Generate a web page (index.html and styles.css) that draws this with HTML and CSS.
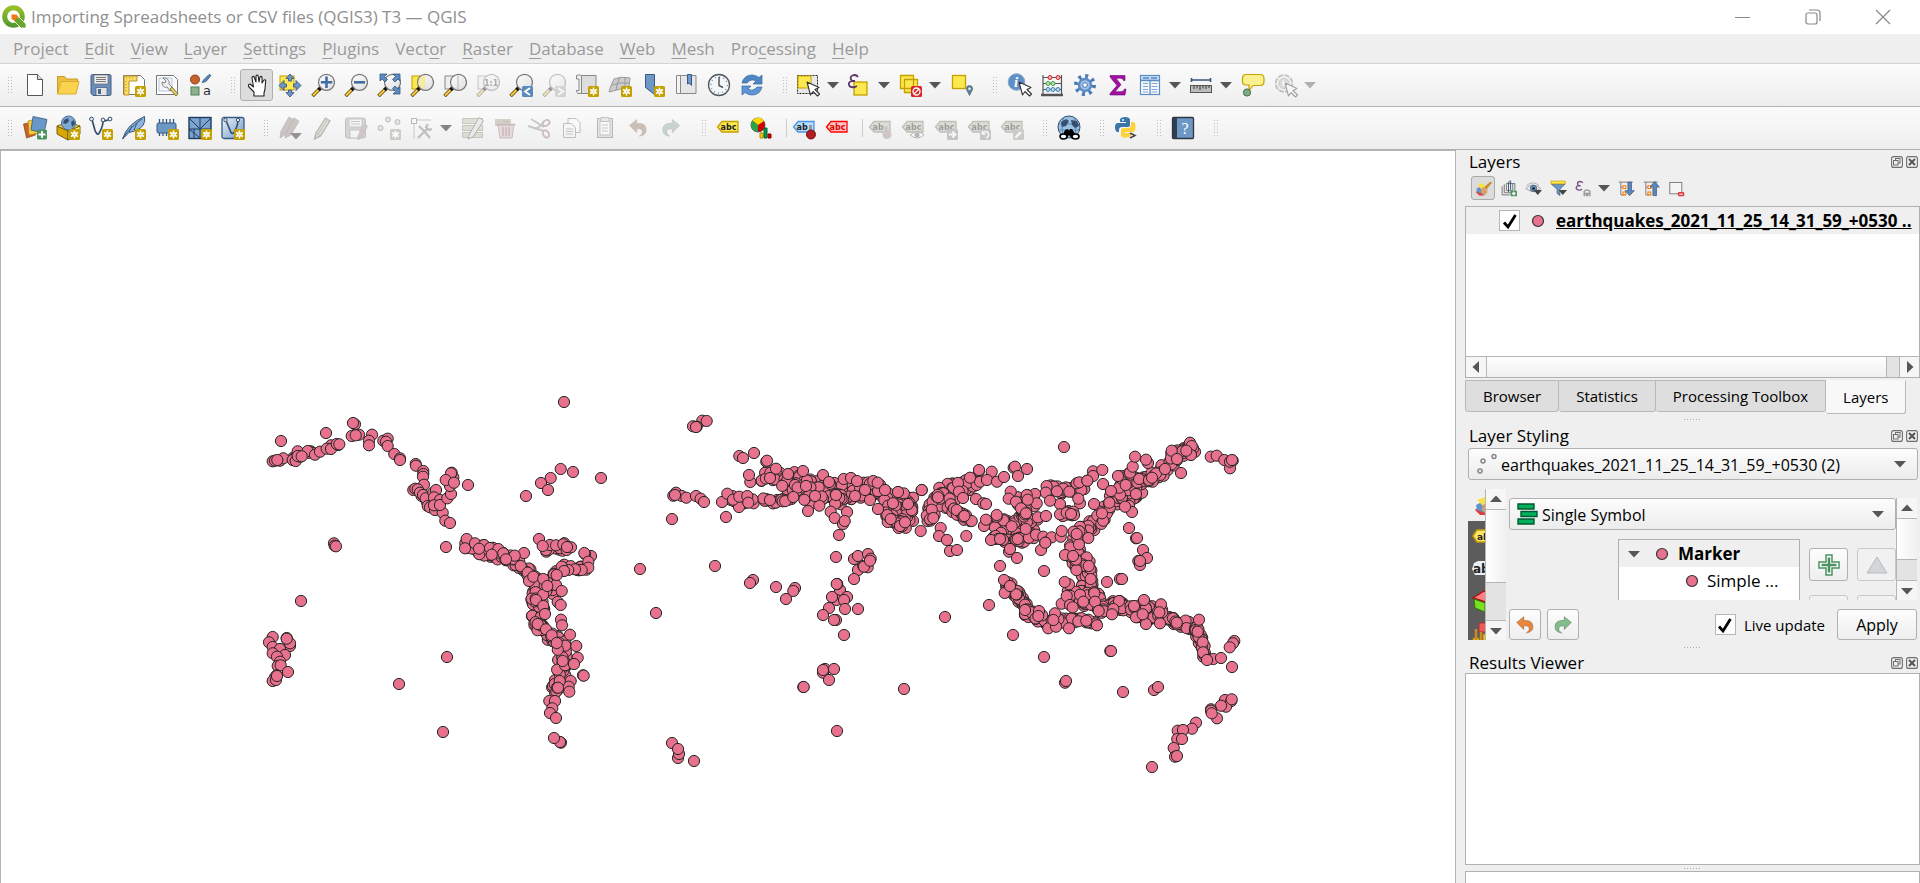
FILE: index.html
```html
<!DOCTYPE html>
<html lang="en">
<head>
<meta charset="utf-8">
<title>Importing Spreadsheets or CSV files (QGIS3) T3 — QGIS</title>
<link rel="stylesheet" href="styles.css">
</head>
<body>
<svg class="sprite" aria-hidden="true">
  <defs>
    <linearGradient id="g-lens" x1="0" y1="0" x2="1" y2="1"><stop offset="0" stop-color="#fff"/><stop offset="1" stop-color="#dcdcdc"/></linearGradient>
    <linearGradient id="g-blue" x1="0" y1="0" x2="1" y2="1"><stop offset="0" stop-color="#eef4fb"/><stop offset="1" stop-color="#6d97c4"/></linearGradient>
    <linearGradient id="g-logo" x1="0" y1="0" x2="0" y2="1"><stop offset="0" stop-color="#97bf2a"/><stop offset="1" stop-color="#579a30"/></linearGradient>
  </defs>
  <symbol id="star" viewBox="0 0 24 24"><rect x="13" y="13" width="11" height="11" rx="1.500" fill="#c4a000"/><path d="M18.500 14.500v8M15 16.500l7 4M22 16.500l-7 4" stroke="#fff" stroke-width="1.500"/><circle cx="18.500" cy="18.500" r="2.300" fill="#fff"/><circle cx="18.500" cy="18.500" r="1" fill="#e5cf6a"/></symbol>
  <symbol id="star-gray" viewBox="0 0 24 24"><rect x="13" y="13" width="11" height="11" rx="1.500" fill="#999980"/><path d="M18.500 14.500v8M15 16.500l7 4M22 16.500l-7 4" stroke="#fff" stroke-width="1.500"/><circle cx="18.500" cy="18.500" r="2.300" fill="#fff"/></symbol>
  <symbol id="lens" viewBox="0 0 24 24"><path d="M9 15.500L1.500 23" stroke="#5c4a10" stroke-width="3.600"/><path d="M8 16.500L2 22.500" stroke="#fcc93b" stroke-width="2"/><path d="M10.500 14L7.500 17" stroke="#111" stroke-width="3.600"/><circle cx="15.500" cy="9.300" r="8" fill="url(#g-lens)" fill-opacity=".9" stroke="#777" stroke-width="1.200"/></symbol>
  <symbol id="cursor" viewBox="0 0 24 24"><path d="M11 9l3.500 13 2.500-3.500 4.500 4.500 2-2-4.500-4.500 4-2z" fill="#fff" stroke="#333" stroke-width="1.100" stroke-linejoin="round"/></symbol>
  <symbol id="tag" viewBox="0 0 24 24"><path d="M1.500 11L6 5.500h16v10.500H6z" fill="var(--tag-fill)" stroke="var(--tag-line)" stroke-width="1.300"/></symbol>
  <symbol id="pencil" viewBox="0 0 24 24"><path d="M5 17L14.500 2l4.500 3L9.500 20 3.500 23z" fill="#c2c296" stroke="#555" stroke-width="1.200"/><path d="M7 18.500L16.500 3.500M5 17l4.500 3" fill="none" stroke="#777"/></symbol>
  <symbol id="undo" viewBox="0 0 24 24"><path d="M2 9l8.500-7v4.500c8 0 11 2 11 8 0 4-3 6.500-8 7 3-2 4-3.500 3.500-6-.5-2-2.500-2.500-6.500-2.500v4.500z" fill="currentColor" stroke="#8a5a2a" stroke-opacity=".55"/></symbol>
  <symbol id="redo" viewBox="0 0 24 24"><path d="M22 9l-8.500-7v4.500c-8 0-11 2-11 8 0 4 3 6.500 8 7-3-2-4-3.500-3.500-6 .5-2 2.500-2.500 6.500-2.500v4.500z" fill="currentColor" stroke="#3a6a4a" stroke-opacity=".55"/></symbol>
  <symbol id="dot" viewBox="0 0 14 14"><circle cx="7" cy="7" r="5.500" fill="#e8718d" stroke="#333" stroke-width="1.200"/></symbol>
  <symbol id="down" viewBox="0 0 12 8"><path d="M0 1h12L6 7.500z" fill="#565656"/></symbol>
  <symbol id="up" viewBox="0 0 12 8"><path d="M0 7h12L6 .5z" fill="#565656"/></symbol>
  <symbol id="check" viewBox="0 0 18 18"><path d="M3 10.500l4 4.500L14.500 3" fill="none" stroke="#000" stroke-width="2.800"/></symbol>
  <symbol id="brush" viewBox="0 0 24 24"><path d="M1 17l5-4 9 6-3 3H6z" fill="#e33b3b"/><path d="M2 12l6-3 6 8-3 3-8-3z" fill="#5e93d0"/><path d="M3 7l8-3 4 6-5 4z" fill="#f7e04a"/><path d="M9 12l3-2 6 7-5 5-5-5z" fill="#d9a064"/><path d="M13 11l1-2 8-7 2 2-7 8 1 3z" fill="#c98b28"/></symbol>
  <symbol id="float" viewBox="0 0 12 12"><rect x=".6" y=".6" width="10.800" height="10.800" rx="2" fill="none" stroke="#6e6e6e" stroke-width="1.100"/><rect x="4.500" y="2.500" width="4.500" height="4.500" fill="none" stroke="#6e6e6e"/><rect x="2.500" y="4.500" width="4.500" height="4.500" fill="#efefef" stroke="#6e6e6e"/></symbol>
  <symbol id="close" viewBox="0 0 12 12"><rect x=".6" y=".6" width="10.800" height="10.800" rx="2" fill="none" stroke="#6e6e6e" stroke-width="1.100"/><path d="M3 3l6 6M9 3L3 9" stroke="#555" stroke-width="2"/></symbol>
</svg>

<header class="titlebar">
  <svg class="logo" viewBox="0 0 24 24"><circle cx="11.500" cy="11.500" r="8.800" fill="none" stroke="url(#g-logo)" stroke-width="5"/><path d="M12 12h5l7 7v4h-5l-7-7z" fill="#6ba52e" stroke="#fff" stroke-width=".8"/><path d="M9.500 9.500h5l2 2.500-2.500 1.500-1 2.500-3.500-2z" fill="#ee7913"/></svg>
  <h1>Importing Spreadsheets or CSV files (QGIS3) T3 — QGIS</h1>
  <div class="window-buttons">
    <button aria-label="Minimize"><svg viewBox="0 0 16 16"><path d="M0 8.500h15" stroke="#888"/></svg></button>
    <button aria-label="Restore"><svg viewBox="0 0 16 16"><rect x="1" y="4" width="11" height="11" rx="2" fill="none" stroke="#888" stroke-width="1.200"/><path d="M4 1h8a3 3 0 0 1 3 3v8" fill="none" stroke="#888" stroke-width="1.200"/></svg></button>
    <button aria-label="Close"><svg viewBox="0 0 16 16"><path d="M1 1l14 14M15 1L1 15" stroke="#888" stroke-width="1.200"/></svg></button>
  </div>
</header>

<nav class="menubar">
  <button>Pro<u>j</u>ect</button><button><u>E</u>dit</button><button><u>V</u>iew</button><button><u>L</u>ayer</button><button><u>S</u>ettings</button><button><u>P</u>lugins</button><button>Vect<u>o</u>r</button><button><u>R</u>aster</button><button><u>D</u>atabase</button><button><u>W</u>eb</button><button><u>M</u>esh</button><button>Pro<u>c</u>essing</button><button><u>H</u>elp</button>
</nav>

<div class="toolbar" role="toolbar" aria-label="Project and navigation">
  <span class="grip"></span>
  <button class="tool" aria-label="New project"><svg viewBox="0 0 24 24"><path d="M4.500 1.500h10l5 5v16h-15z" fill="#fff" stroke="#555"/><path d="M14.500 1.500v5h5" fill="#ddd" stroke="#555"/></svg></button>
  <button class="tool" aria-label="Open project"><svg viewBox="0 0 24 24"><path d="M1.500 21V3.500h7l2 2.500h11v3" fill="#ecc13f" stroke="#c79d21"/><path d="M1.500 21L5 8.500h18L20 21z" fill="#fbd34e" stroke="#d9ac2c"/></svg></button>
  <button class="tool" aria-label="Save project"><svg viewBox="0 0 24 24"><path d="M2 3q0-1.500 1.500-1.500h17Q22 1.500 22 3v18q0 1.500-1.500 1.500H4L2 20.500z" fill="#6a8fbd" stroke="#425c7e"/><path d="M5 2h14v9H5z" fill="#eee" stroke="#666" stroke-width=".7"/><path d="M7 4.500h10M7 6.500h10M7 8.500h10" stroke="#777"/><path d="M7 14.500h11v8H7z" fill="#e3e3e3" stroke="#42597a" stroke-width=".7"/><path d="M9 16h3v5H9z" fill="#4a688f"/></svg></button>
  <button class="tool" aria-label="New layout"><svg viewBox="0 0 24 24"><path d="M1.500 2.500h17l4 4v15h-21z" fill="#fff" stroke="#777"/><path d="M2 3h13v5H7v14H2z" fill="#fbdc63" stroke="#b8922a"/><path d="M4 5h9M4 8v12" stroke="#b8922a" stroke-dasharray="1 2"/><use href="#star"/></svg></button>
  <button class="tool" aria-label="Layout manager"><svg viewBox="0 0 24 24"><path d="M1.500 2.500h17l4 4v15h-21z" fill="#fff" stroke="#777"/><path d="M4 5h13v13H4z" fill="#f4f6ff" stroke="#b9c2e6"/><path d="M8 5l3 3-1 2-3-1c0 5 3 6 5 5l3 4 3-3-4-4c1-3-2-7-6-6z" fill="#eee" stroke="#777" stroke-width=".9"/><path d="M15 16l2-2 6 7-2 2z" fill="#e2cb6a" stroke="#8a7830"/></svg></button>
  <button class="tool" aria-label="Style manager"><svg viewBox="0 0 24 24"><circle cx="7" cy="6.500" r="4.500" fill="#c8622c" stroke="#8b3f15"/><path d="M14 9.500l2-3 5-5 2 1-5 6z" fill="#5b87bd" stroke="#36557c" stroke-width=".8"/><rect x="3" y="14" width="8" height="8" fill="#8db08d" stroke="#4e8356"/><text x="15" y="22" class="t-a">a</text></svg></button>
  <span class="grip"></span>
  <button class="tool on" aria-label="Pan map"><svg viewBox="0 0 24 24"><path d="M9 23v-4L4 14q-1.500-2.500 1-3l3.500 3L7 5q0-2 1.800-1.800L11 9V3q1-2 2.200 0L14 9l1-5q1.500-1.500 2 .5V10l2-3q2-1 1.600 1.500L20 16l-1 4v3z" fill="#fff" stroke="#222" stroke-width="1.100" stroke-linejoin="round"/></svg></button>
  <button class="tool" aria-label="Pan map to selection"><svg viewBox="0 0 24 24"><rect x="2" y="3" width="14" height="14" fill="#fce94f" stroke="#c4a000"/><path d="M12 1l4 4.500h-2.500V8h-3V5.500H8zM12 24l-4-4.500h2.500V17h3v2.500H16zM1 12.500l5-5V11h2.500v3H6v3.500zM23 12.500l-5-5V11h-2.500v3H18v3.500z" fill="#6d97c4" stroke="#375a85" stroke-width=".9"/></svg></button>
  <button class="tool" aria-label="Zoom in"><svg viewBox="0 0 24 24"><use href="#lens"/><path d="M15.500 3.500v11.500M9.800 9.300h11.500" stroke="#3f6ea5" stroke-width="2.600"/></svg></button>
  <button class="tool" aria-label="Zoom out"><svg viewBox="0 0 24 24"><use href="#lens"/><path d="M10 9.300h11" stroke="#3f6ea5" stroke-width="2.600"/></svg></button>
  <button class="tool" aria-label="Zoom full"><svg viewBox="0 0 24 24"><use href="#lens"/><path d="M3 1h7L7.500 3.500l3 3-2.500 2.500-3-3L3 8zM23 1h-7l2.500 2.500-3 3L18 9l3-3L23 8zM23 21h-7l2.500-2.500-3-3L18 13l3 3 2-2z" fill="#5d8bc0" stroke="#34577f" stroke-width=".8"/></svg></button>
  <button class="tool" aria-label="Zoom to selection"><svg viewBox="0 0 24 24"><rect x="2" y="3" width="13" height="13" fill="#fce94f" stroke="#c4a000"/><use href="#lens"/><path d="M9 6q2-3 6-3.500v13q-5-1-6.500-4z" fill="#f4e98a" opacity=".75"/></svg></button>
  <button class="tool" aria-label="Zoom to layer"><svg viewBox="0 0 24 24"><rect x="2" y="3" width="13" height="13" fill="#eee" stroke="#888"/><use href="#lens"/><path d="M15 3v13" stroke="#bbb"/></svg></button>
  <button class="tool off" aria-label="Zoom native"><svg viewBox="0 0 24 24"><rect x="2" y="3" width="13" height="13" fill="#eee" stroke="#888"/><use href="#lens"/><text x="8" y="13" class="t-11">1:1</text></svg></button>
  <button class="tool" aria-label="Zoom last"><svg viewBox="0 0 24 24"><use href="#lens"/><rect x="13" y="13" width="11" height="11" rx="1.500" fill="#5a89be"/><path d="M21 15l-5 3.500 5 3.500" fill="none" stroke="#fff" stroke-width="1.800"/></svg></button>
  <button class="tool off" aria-label="Zoom next"><svg viewBox="0 0 24 24"><use href="#lens"/><rect x="13" y="13" width="11" height="11" rx="1.500" fill="#aaa"/><path d="M16 15l5 3.500-5 3.500" fill="none" stroke="#fff" stroke-width="1.800"/></svg></button>
  <button class="tool" aria-label="New map view"><svg viewBox="0 0 24 24"><path d="M5 2.500h16v18H5z" fill="#ddd" stroke="#888"/><path d="M1.500 2.500q3-1.500 5 0v18H3q-2-1-1.500-3H4V6H1.500z" fill="#eee" stroke="#888"/><use href="#star"/></svg></button>
  <button class="tool" aria-label="New 3D map view"><svg viewBox="0 0 24 24"><path d="M6 6q7-3 16-1l-1 9-20 5q2-8 5-13z" fill="#ccc" stroke="#999"/><path d="M4 12q8-3 17-2M12 4q-3 6-4 13M17 4v11" fill="none" stroke="#999"/><use href="#star"/></svg></button>
  <button class="tool" aria-label="New bookmark"><svg viewBox="0 0 24 24"><path d="M4.500 1.500h9v20L9 18l-4.500-3.500z" fill="#6d97c4" stroke="#375a85"/><use href="#star"/></svg></button>
  <button class="tool" aria-label="Show bookmarks"><svg viewBox="0 0 24 24"><path d="M4 2.500h18v18H4z" fill="#e6e6e6" stroke="#888"/><path d="M2.500 2.500h4v18h-4z" fill="#f4f4f4" stroke="#888"/><path d="M13.500 1.500h4v11l-2-2.500-2 1z" fill="#6d97c4" stroke="#375a85"/></svg></button>
  <button class="tool" aria-label="Temporal controller"><svg viewBox="0 0 24 24"><circle cx="12" cy="12" r="10.500" fill="#f4f7fa" stroke="#555" stroke-width="1.300"/><circle cx="12" cy="12" r="8.200" fill="none" stroke="#6d97c4" stroke-width="1.600" stroke-dasharray="1 3.290"/><path d="M12 4v8.500l4 2" fill="none" stroke="#555" stroke-width="1.500"/></svg></button>
  <button class="tool" aria-label="Refresh"><svg viewBox="0 0 24 24"><path d="M2 10Q4 2 12 2q4 0 7 2.500L22 2v9h-9l3-3q-5-3-9 2z" fill="#4f86c6" stroke="#3567a0" stroke-width=".7"/><path d="M22 14q-2 8-10 8-4 0-7-2.500L2 22v-9h9l-3 3q5 3 9-2z" fill="#5f95d2" stroke="#3567a0" stroke-width=".7"/></svg></button>
  <span class="grip"></span>
  <button class="tool drop" aria-label="Select features"><svg viewBox="0 0 24 24"><rect x="1.500" y="2.500" width="20" height="18" fill="#e8e8e8" stroke="#222" stroke-dasharray="2 1"/><rect x="2" y="3" width="13" height="12" fill="#fce94f" stroke="#c4a000"/><use href="#cursor"/></svg><svg class="arrow"><use href="#down"/></svg></button>
  <button class="tool drop" aria-label="Select by expression"><svg viewBox="0 0 24 24"><rect x="7" y="9" width="13" height="13" fill="#fce94f" stroke="#c4a000" stroke-width="1.300"/><path d="M11 4Q9 1 5.500 2.500T5 8h3-3q-4 1-3 4t6 2l2-1" fill="none" stroke="#5c3566" stroke-width="1.800"/></svg><svg class="arrow"><use href="#down"/></svg></button>
  <button class="tool drop" aria-label="Deselect"><svg viewBox="0 0 24 24"><path d="M2.500 2.500h13v13h-13zM6.500 6.500h13v13h-13z" fill="#fce94f" stroke="#c4a000" stroke-width="1.300"/><rect x="13" y="13" width="11" height="11" rx="1.500" fill="#d9262c"/><circle cx="18.500" cy="18.500" r="3.500" fill="none" stroke="#fff" stroke-width="1.300"/><path d="M16 21l5-5" stroke="#fff" stroke-width="1.300"/></svg><svg class="arrow"><use href="#down"/></svg></button>
  <button class="tool" aria-label="Select by location"><svg viewBox="0 0 24 24"><rect x="2.500" y="2.500" width="13" height="13" fill="#fce94f" stroke="#c4a000" stroke-width="1.300"/><path d="M19.500 22.500l-3-6q-.500-4 3-4t3 4z" fill="#5f8199" stroke="#48667c" stroke-width=".7"/><circle cx="19.500" cy="15.800" r="1.200" fill="#fff"/></svg></button>
  <span class="grip"></span>
  <button class="tool" aria-label="Identify features"><svg viewBox="0 0 24 24"><circle cx="9.500" cy="9" r="8.300" fill="#5f8fc6" stroke="#88a9cf"/><text x="7" y="14" class="t-i">i</text><use href="#cursor" x="1"/></svg></button>
  <button class="tool" aria-label="Field calculator"><svg viewBox="0 0 24 24"><path d="M3 2v19M21.500 2v19M3 4.500h19M3 10.500h19M3 16.500h19" stroke="#555" stroke-width="1.200"/><path d="M1 22h22" stroke="#555" stroke-width="2.500"/><g stroke-width="1"><g fill="#f3b3b3" stroke="#c22"><circle cx="10" cy="4.500" r="2"/><circle cx="18" cy="4.500" r="2"/></g><g fill="#bfe6bf" stroke="#3a9a3a"><circle cx="8" cy="10.500" r="2"/><circle cx="13" cy="10.500" r="2"/></g><g fill="#b5daf3" stroke="#3a82b0"><circle cx="8" cy="16.500" r="2"/><circle cx="13" cy="16.500" r="2"/><circle cx="18" cy="16.500" r="2"/></g></g></svg></button>
  <button class="tool" aria-label="Processing toolbox"><svg viewBox="0 0 24 24"><circle cx="12" cy="12" r="8.800" fill="none" stroke="#4b7ab8" stroke-width="4.400" stroke-dasharray="2.900 4"/><circle cx="12" cy="12" r="6" fill="#a4c1e4" stroke="#5a8ac6" stroke-width="2.400"/><circle cx="12" cy="12" r="2.400" fill="#f4f4f4" stroke="#4b7ab8"/></svg></button>
  <button class="tool" aria-label="Statistical summary"><svg viewBox="0 0 24 24"><path d="M4 2.500h15v5h-1.500q-.5-2.300-3-2.300H10l5 6.500-6 7h6q3 0 3.500-2.700H20L19 22H4v-1.500l7-8L4 4z" fill="#a011a0" stroke="#7a007a" stroke-width=".6"/></svg></button>
  <button class="tool drop" aria-label="Attribute table"><svg viewBox="0 0 24 24"><rect x="2.500" y="2.500" width="19" height="19" fill="#f6f9fc" stroke="#5b8cc4" stroke-width="1.200"/><path d="M3 3h18v4H3z" fill="#bcd9f5"/><path d="M5 5h6M13 5h6M3 7.500h18M12 8v13" stroke="#5b8cc4" stroke-width="1.300"/><path d="M5 10.500h5M13.500 10.500h6M5 13.500h5M13.500 13.500h6M5 16.500h5M13.500 16.500h6M5 19h5M13.500 19h6" stroke="#7fa6d4"/></svg><svg class="arrow"><use href="#down"/></svg></button>
  <button class="tool drop" aria-label="Measure"><svg viewBox="0 0 24 24"><path d="M2.500 7h19M2.500 5v4M21.500 5v4" stroke="#36557c" stroke-width="1.600"/><rect x="1.500" y="12.500" width="21" height="7" fill="#bdbdbd" stroke="#555"/><path d="M5 13v3M8 13v2.500M11 13v4M14 13v2.500M17 13v3M20 13v2" stroke="#333"/></svg><svg class="arrow"><use href="#down"/></svg></button>
  <button class="tool" aria-label="Map tips"><svg viewBox="0 0 24 24"><path d="M5 1.500h14q4 0 4 4v3q0 4-4 4h-7l-4 5V12H5q-3.500 0-3.500-3.500v-3q0-4 3.500-4z" fill="#fbf08f" stroke="#c4a000" stroke-width="1.200"/><circle cx="6" cy="19.500" r="3.600" fill="#7fac83" stroke="#456b49"/></svg></button>
  <button class="tool drop off" aria-label="Run feature action"><svg viewBox="0 0 24 24"><circle cx="11" cy="10.500" r="8" fill="#ddd" stroke="#777" stroke-width="2.500" stroke-dasharray="5 1.300"/><circle cx="11" cy="10.500" r="7.600" fill="#e6e6e6"/><circle cx="11" cy="10.500" r="5" fill="#bbb" stroke="#888"/><path d="M9.500 7.500l5 3-5 3z" fill="#fff"/><use href="#cursor" x="1" y="1"/></svg><svg class="arrow"><use href="#down"/></svg></button>
</div>

<div class="toolbar second" role="toolbar" aria-label="Data source, digitizing and labels">
  <span class="grip"></span>
  <button class="tool" aria-label="Data source manager"><svg viewBox="0 0 24 24"><path d="M0.500 8l10-2 2 13-9 3z" fill="#c8622c" stroke="#8b3f15" stroke-width=".7"/><path d="M5 5l9-2 2 14-10 2z" fill="#fcc93b" stroke="#a97d12" stroke-width=".7"/><path d="M10 .5L24 3.500 21 17 8 14z" fill="#6a97c9" stroke="#35587f" stroke-width=".8"/><rect x="14" y="13.500" width="10" height="10" rx="1.500" fill="#4e9161"/><path d="M19 15v7M15.500 18.500h7" stroke="#fff" stroke-width="1.800"/></svg></button>
  <button class="tool" aria-label="New GeoPackage layer"><svg viewBox="0 0 24 24"><path d="M1 10l11 5V24L1 18z" fill="#d6a800" stroke="#6b5500" stroke-width=".9"/><path d="M12 15l12-5v8l-12 6z" fill="#fdf36c" stroke="#6b5500" stroke-width=".9"/><path d="M1 10l11-4 12 4-12 5z" fill="#e8cb3f" stroke="#6b5500" stroke-width=".8"/><circle cx="12.500" cy="7" r="7" fill="#7fa9d6" stroke="#4a6c91"/><path d="M8 4l4-2 1 3-3 3-3-1zM15 6l3-2 1 4-3 3z" fill="#35506e"/><use href="#star"/></svg></button>
  <button class="tool" aria-label="New shapefile layer"><svg viewBox="0 0 24 24"><path d="M3 3.500l3 11q2 5 4 3 4-7 4-12l7-2" fill="none" stroke="#35506e" stroke-width="1.700"/><g fill="#eee" stroke="#35506e"><circle cx="2.500" cy="3" r="1.900"/><circle cx="14" cy="4" r="1.900"/><circle cx="21" cy="3" r="1.900"/></g><use href="#star"/></svg></button>
  <button class="tool" aria-label="New SpatiaLite layer"><svg viewBox="0 0 24 24"><path d="M.5 23Q5 8 22.500.5q1 5-1.500 9-4 5-14 7z" fill="#8fb4dd" stroke="#35587f"/><path d="M.5 23Q8 11 20 3M7 16l3-6M12 14l3-7" fill="none" stroke="#35587f"/><use href="#star"/></svg></button>
  <button class="tool" aria-label="New temporary layer"><svg viewBox="0 0 24 24"><path d="M4.500 3v17M8 3v17M11.500 3v17M15 3v17M18.500 3v17" stroke="#35587f" stroke-width="1.300"/><rect x="2" y="7" width="19" height="10" rx="1.500" fill="#6d97c4" stroke="#375a85"/><use href="#star"/></svg></button>
  <button class="tool" aria-label="New mesh layer"><svg viewBox="0 0 24 24"><rect x="1" y="1.500" width="22" height="21" fill="#7aa3d0" stroke="#1f3b5c" stroke-width="1.400"/><path d="M1 13h22M12 1.500V23M1 2l11 11L23 2M1 13l11 9M6 13v9" fill="none" stroke="#1f3b5c"/><use href="#star"/></svg></button>
  <button class="tool" aria-label="New virtual layer"><svg viewBox="0 0 24 24"><rect x="1" y="1.500" width="22" height="21" rx="2" fill="url(#g-blue)" stroke="#375a85" stroke-width="1.300"/><path d="M5 4.500l5 12q1.500 2 3 0 4-7 4-12" fill="none" stroke="#35506e" stroke-width="1.600"/><g fill="#eee" stroke="#35506e"><circle cx="4.500" cy="4" r="1.700"/><circle cx="17" cy="4" r="1.700"/></g><use href="#star"/></svg></button>
  <span class="grip"></span>
  <button class="tool off" aria-label="Current edits"><svg viewBox="0 0 24 24"><g fill="#a08078" stroke="#666" stroke-width=".8"><path d="M3 15L11 1l5 3-8 14-6 4z"/><path d="M8 17L16 2l5 3-8 14-6 3z"/></g><path d="M12 17h12l-6 6.500z" fill="#111"/></svg></button>
  <button class="tool off" aria-label="Toggle editing"><svg viewBox="0 0 24 24"><use href="#pencil"/></svg></button>
  <button class="tool off" aria-label="Save edits"><svg viewBox="0 0 24 24"><rect x="1.500" y="2" width="20" height="20" rx="2" fill="#aaa" stroke="#777"/><path d="M5 3h13v8H5zM6 14h10v8H6z" fill="#f4f4f4" stroke="#888"/><path d="M7 5.500h9M7 8h9" stroke="#888"/><path d="M14 20l6-12 3.500 2L18 21l-4 3z" fill="#b5847c" stroke="#888"/></svg></button>
  <button class="tool off" aria-label="Add point"><svg viewBox="0 0 24 24"><g fill="#ccc" stroke="#666"><circle cx="3.500" cy="12" r="2.500"/><circle cx="11" cy="3.500" r="2.500"/><circle cx="20.500" cy="6" r="2.500"/></g><use href="#star-gray"/></svg></button>
  <button class="tool drop off" aria-label="Vertex tool"><svg viewBox="0 0 24 24"><path d="M5 8v15M7 4h15" fill="none" stroke="#888"/><rect x="2.500" y="2.500" width="5" height="5" fill="#fff" stroke="#666"/><path d="M9 22l9-9M19 8l-2 3 3 3 3-1M10 10l5 5 6 7" fill="none" stroke="#777" stroke-width="2.200"/></svg><svg class="arrow dark"><use href="#down"/></svg></button>
  <button class="tool off" aria-label="Modify attributes"><svg viewBox="0 0 24 24"><path d="M1.500 2.500h20v5h-20zM1.500 9.500h20v5h-20zM1.500 16.500h20v5h-20z" fill="#c0c198" stroke="#888870"/><path d="M8 19L18 1.500l4.500 3L12 21l-5 2z" fill="#ddd" stroke="#555"/></svg></button>
  <button class="tool off" aria-label="Delete selected"><svg viewBox="0 0 24 24"><path d="M1 3h16v7H1z" fill="#aaa17c"/><path d="M4 9l2 13h12l2-13z" fill="#e0b4b4" stroke="#a66"/><path d="M2.500 8.500h19M9 5.500h6M9 11v9M12 11v9M15 11v9" stroke="#a66" stroke-width="1.600"/></svg></button>
  <button class="tool off" aria-label="Cut"><svg viewBox="0 0 24 24"><path d="M1 10l16 5M4 3l13 8" stroke="#888" stroke-width="2"/><g fill="none" stroke="#a66" stroke-width="1.800"><ellipse cx="19" cy="7" rx="3.800" ry="2.500" transform="rotate(-30 19 7)"/><ellipse cx="19" cy="18" rx="2.800" ry="3.800" transform="rotate(-30 19 18)"/></g><path d="M17 8L8 13" stroke="#888" stroke-width="2"/></svg></button>
  <button class="tool off" aria-label="Copy"><svg viewBox="0 0 24 24"><path d="M8 2.500h8l4 4v10H8z" fill="#fff" stroke="#777"/><path d="M3.500 7.500h8l4 4v10h-12z" fill="#f6f6f6" stroke="#777"/><path d="M6 13h7M6 15.500h7M6 18h7" stroke="#888"/></svg></button>
  <button class="tool off" aria-label="Paste"><svg viewBox="0 0 24 24"><rect x="4.500" y="2.500" width="15" height="19" fill="#ccc" stroke="#666"/><path d="M7 5h10v14H7z" fill="#fff" stroke="#888"/><path d="M8 1.500h8v4H8z" fill="#ddd" stroke="#777"/><path d="M9 9h6M9 12h6M9 15h6" stroke="#888"/></svg></button>
  <button class="tool off brown" aria-label="Undo"><svg viewBox="-2 -2 28 28"><use href="#undo" width="24" height="24"/></svg></button>
  <button class="tool off teal" aria-label="Redo"><svg viewBox="-2 -2 28 28"><use href="#redo" width="24" height="24"/></svg></button>
  <span class="grip"></span>
  <button class="tool tag-yellow" aria-label="Layer labeling"><svg viewBox="0 0 24 24"><use href="#tag"/><text x="4.500" y="13.500" class="t-abc">abc</text></svg></button>
  <button class="tool" aria-label="Diagram options"><svg viewBox="0 0 24 24"><circle cx="9" cy="9" r="7" fill="#d40000" stroke="#333" stroke-width=".7"/><path d="M9 9L3.500 4.500A7 7 0 0 1 15 5z" fill="#ffd800"/><path d="M9 9L3.500 4.500A7 7 0 0 0 9 16z" fill="#2fa04a"/><path d="M11 17h3v5h-3z" fill="#ffcc00" stroke="#b80"/><path d="M15 12h3v10h-3z" fill="#009b48" stroke="#063"/><path d="M19 18h3v4h-3z" fill="#d40000" stroke="#800"/></svg></button>
  <span class="rule"></span>
  <button class="tool tag-blue" aria-label="Pin labels"><svg viewBox="0 0 24 24"><use href="#tag"/><text x="4.500" y="13.500" class="t-abc">ab</text><path d="M18.500 9v6" stroke="#999" stroke-width="3"/><circle cx="19" cy="18.500" r="4.500" fill="#b11e26" stroke="#7c1016"/></svg></button>
  <button class="tool tag-red" aria-label="Unplaced labels"><svg viewBox="0 0 24 24"><use href="#tag"/><text x="4.500" y="13.500" class="t-abc">abc</text></svg></button>
  <span class="rule"></span>
  <button class="tool off tag-gray" aria-label="Highlight pinned labels"><svg viewBox="0 0 24 24"><use href="#tag"/><text x="4.500" y="13.500" class="t-abc">ab</text><path d="M18 10v6" stroke="#888" stroke-width="3"/><circle cx="19" cy="18.500" r="4.500" fill="#a88"/></svg></button>
  <button class="tool off tag-gray" aria-label="Show or hide labels"><svg viewBox="0 0 24 24"><use href="#tag"/><text x="4.500" y="13.500" class="t-abc">abc</text><path d="M9 19q7-6 14 0-7 6-14 0z" fill="#fff" stroke="#666"/><circle cx="16" cy="19" r="2.500" fill="#666"/></svg></button>
  <button class="tool off tag-gray" aria-label="Move label"><svg viewBox="0 0 24 24"><use href="#tag"/><text x="4.500" y="13.500" class="t-abc">abc</text><rect x="13" y="13" width="11" height="11" rx="1.500" fill="#888"/><path d="M15 18.500h6M18.500 15.500l3 3-3 3" fill="none" stroke="#fff" stroke-width="1.800"/></svg></button>
  <button class="tool off tag-gray" aria-label="Rotate label"><svg viewBox="0 0 24 24"><use href="#tag"/><text x="4.500" y="13.500" class="t-abc">abc</text><rect x="13" y="13" width="11" height="11" rx="1.500" fill="#888"/><path d="M16 17q3-3 5 0t-2 5M15.500 15v3h3" fill="none" stroke="#fff" stroke-width="1.600"/></svg></button>
  <button class="tool off tag-gray" aria-label="Change label"><svg viewBox="0 0 24 24"><use href="#tag"/><text x="4.500" y="13.500" class="t-abc">abc</text><rect x="13" y="13" width="11" height="11" rx="1.500" fill="#998"/><path d="M15.500 21.500l5.500-5.500" stroke="#fff" stroke-width="2.400"/></svg></button>
  <span class="grip"></span>
  <button class="tool" aria-label="MetaSearch"><svg viewBox="0 0 24 24"><circle cx="12" cy="11" r="11" fill="#9dbfe2" stroke="#35506e"/><path d="M2 8h20M2 14h20M7 1q-4 10 0 20M17 1q4 10 0 20" fill="none" stroke="#6289b3"/><path d="M4 6l5-3 3 2-3 5-4 1zM14 4l6 1 2 5-4 2-3-3z" fill="#35506e"/><path d="M5 21l3-7 3-1 1 2 1-2h2l5 8-5 2-3-4-3 4z" fill="#000"/><g fill="#fff" stroke="#000" stroke-width="1.600"><ellipse cx="6.500" cy="20.500" rx="3.500" ry="2.500"/><ellipse cx="18.500" cy="20.500" rx="3.500" ry="2.500"/></g></svg></button>
  <span class="grip"></span>
  <button class="tool" aria-label="Python console"><svg viewBox="0 0 24 24"><path d="M7 2q4-2 8 0 1.500 1 1 3v4q0 2-3 2H8q-3 0-3 3v2H3q-2-1-2-5t3-4h8V6H6V4q0-1.500 1-2z" fill="#3b77a8"/><path d="M17 6h2q2.500 0 2.500 5T19 16h-8v1h6v2q0 2-5 2.500T7 19v-5q0-2 3-2h4q3 0 3-3z" fill="#fdd23c"/><circle cx="9" cy="4" r=".9" fill="#fff"/><path d="M16 17l5 2.500-5 2.500" fill="none" stroke="#444" stroke-width="1.500"/></svg></button>
  <span class="grip"></span>
  <button class="tool" aria-label="Help contents"><svg viewBox="0 0 24 24"><rect x="1.500" y="1.500" width="21" height="21" rx="1" fill="#6d97c4" stroke="#2f353d" stroke-width="1.300"/><path d="M2 2h4v20H2z" fill="#2c3e50"/><text x="10.500" y="17.500" class="t-q">?</text></svg></button>
  <span class="grip"></span>
</div>

<div class="workspace">
  <main class="canvas">
    <svg id="map" viewBox="0 0 1454 732" preserveAspectRatio="xMinYMin meet" role="img" aria-label="Map of earthquake locations"></svg>
  </main>
  <aside class="docks">
    <section class="layers">
      <header class="dock-title"><h2>Layers</h2><button aria-label="Float Layers"><svg><use href="#float"/></svg></button><button aria-label="Close Layers"><svg><use href="#close"/></svg></button></header>
      <div class="mini-tools" role="toolbar" aria-label="Layers tools">
        <button class="on" aria-label="Open layer styling"><svg viewBox="0 0 24 24"><use href="#brush"/></svg></button>
        <button aria-label="Add group"><svg viewBox="0 0 24 24"><path d="M3 9v12h11M6 6v12h10M9 5h12v12M9 5v10h9V5" fill="none" stroke="#777" stroke-width="1.400"/><path d="M14 1q-2 1-2 4v12M15 1v13" fill="none" stroke="#375a85" stroke-width="1.400"/><rect x="15" y="15" width="9" height="8" rx="1" fill="#4e9161"/><path d="M19.500 16.500v5M17 19h5" stroke="#fff" stroke-width="2"/></svg></button>
        <button aria-label="Map themes"><svg viewBox="0 0 24 24"><path d="M1 12Q11 2 22 12 11 20 1 12z" fill="#eee" stroke="#888"/><path d="M2 8q9-8 18 0" fill="none" stroke="#999"/><circle cx="12" cy="12" r="4.500" fill="#6d97c4" stroke="#35506e"/><circle cx="12" cy="12" r="1.800" fill="#111"/><path d="M12 14h12l-6 7z" fill="#444"/></svg></button>
        <button aria-label="Filter legend"><svg viewBox="0 0 24 24"><path d="M2 6h19l-7 7v9l-4-3v-6z" fill="#6d97c4" stroke="#375a85"/><rect x="1.500" y="1.500" width="20" height="4" fill="#fce94f" stroke="#c4a000"/><path d="M12 14h12l-6 7z" fill="#444"/></svg></button>
        <button class="drop" aria-label="Filter by expression"><svg viewBox="0 0 24 24"><path d="M11 4Q9 1 5.500 2.500T5 8h3-3q-4 1-3 4t6 2l2-1" fill="none" stroke="#76518a" stroke-width="2"/><path d="M13 23v-7q4-4 8 0v7M13 19h3v4M18 23v-4h3" fill="none" stroke="#999" stroke-width="2"/></svg><svg class="arrow"><use href="#down"/></svg></button>
        <button aria-label="Expand all"><svg viewBox="0 0 24 24"><path d="M1 3h20M4 3v18h5M4 10h5" fill="none" stroke="#777" stroke-width="1.300"/><path d="M7 8h4v4H7zM7 17h4v4H7z" fill="#fff" stroke="#f57900" stroke-width="1.500"/><path d="M14 3h5v12h4l-6.500 7L10 15h4z" fill="#5b87bd" stroke="#36557c"/></svg></button>
        <button aria-label="Collapse all"><svg viewBox="0 0 24 24"><path d="M1 3h20M4 3v18h5M4 10h5" fill="none" stroke="#777" stroke-width="1.300"/><path d="M7 8h4v4H7zM7 17h4v4H7z" fill="#fff" stroke="#f57900" stroke-width="1.500"/><path d="M14 22h5V10h4l-6.500-8L10 10h4z" fill="#5b87bd" stroke="#36557c"/></svg></button>
        <button aria-label="Remove layer"><svg viewBox="0 0 24 24"><rect x="2.500" y="3.500" width="17" height="16" fill="#f4f4f4" stroke="#777" stroke-width="1.300"/><rect x="14" y="17" width="9" height="6" rx="2" fill="#e0373d"/><path d="M16 20h5" stroke="#fff" stroke-width="1.500"/></svg></button>
      </div>
      <div class="layer-tree">
        <div class="layer-row"><span class="tick"><input type="checkbox" checked aria-label="Show earthquakes layer"><svg><use href="#check"/></svg></span><svg class="dot"><use href="#dot"/></svg><span class="layer-name">earthquakes_2021_11_25_14_31_59_+0530 ..</span></div>
        <div class="hscroll"><button aria-label="Scroll left"><svg class="turn-left"><use href="#up"/></svg></button><span class="thumb"></span><button aria-label="Scroll right"><svg class="turn-right"><use href="#up"/></svg></button></div>
      </div>
      <div class="tabs" role="tablist"><button role="tab">Browser</button><button role="tab">Statistics</button><button role="tab">Processing Toolbox</button><button role="tab" aria-selected="true">Layers</button></div>
    </section>
    <div class="splitter"></div>
    <section class="styling">
      <header class="dock-title"><h2>Layer Styling</h2><button aria-label="Float Layer Styling"><svg><use href="#float"/></svg></button><button aria-label="Close Layer Styling"><svg><use href="#close"/></svg></button></header>
      <div class="combo layer-combo"><svg class="lead" viewBox="0 0 22 22"><g fill="#eee" stroke="#888" stroke-width="1.500"><circle cx="4" cy="18" r="2"/><circle cx="7" cy="8" r="2"/><circle cx="18" cy="3.500" r="2"/></g></svg><select aria-label="Layer"><option>earthquakes_2021_11_25_14_31_59_+0530 (2)</option></select><svg class="arrow"><use href="#down"/></svg></div>
      <div class="style-body">
        <div class="pages">
          <div class="page-list">
            <button aria-label="Symbology" class="current"><svg viewBox="0 0 24 24"><use href="#brush"/></svg></button>
            <button aria-label="Labels"><svg viewBox="0 0 24 24"><path d="M1 11l4-6h19v12H5z" fill="#fce66a" stroke="#c4a000" stroke-width="1.500"/><text x="5" y="14.500" class="t-ab">ab</text></svg></button>
            <button aria-label="Masks"><svg viewBox="0 0 24 24"><path d="M0 12l2-6 4-2h18v14H3z" fill="#e8eef8"/><text x="1" y="15.500" class="t-ab2">ab</text></svg></button>
            <button aria-label="3D view"><svg viewBox="0 0 24 24"><path d="M1 9l11-7 11 5-9 6z" fill="#ff8080" stroke="#b01010" stroke-width="1.400"/><path d="M2 10l11 4v9L3 19z" fill="#7be01d" stroke="#2f7a0a"/><path d="M13 14l9-6v9l-9 6z" fill="#fbe24a"/></svg></button>
            <button aria-label="Diagrams"><svg viewBox="0 0 24 24"><path d="M7 2h16v9H7z" fill="#ee5a5a" stroke="#a33"/><path d="M1 17h6v6H1zM11 13h12v10H11z" fill="#f3c31c" stroke="#a97d12"/><path d="M4 8v11M9 11v12" stroke="#c98b28" stroke-width="2.500"/></svg></button>
          </div>
          <div class="vscroll"><button aria-label="Scroll up"><svg><use href="#up"/></svg></button><span class="thumb"></span><button aria-label="Scroll down"><svg><use href="#down"/></svg></button></div>
        </div>
        <div class="style-main">
          <div class="renderer">
            <div class="renderer-form">
              <div class="combo"><svg class="lead" viewBox="0 0 22 22"><path d="M1 1h16v5H1zM4 8.500h16v5H4zM1 16h16v5H1z" fill="#00b15b" stroke="#005b30" stroke-width="1.400"/></svg><select aria-label="Renderer"><option>Single Symbol</option></select><svg class="arrow"><use href="#down"/></svg></div>
              <div class="symbol-area">
                <div class="symbol-tree">
                  <div class="symbol-row root"><svg class="arrow"><use href="#down"/></svg><svg class="dot"><use href="#dot"/></svg><span>Marker</span></div>
                  <div class="symbol-row leaf"><svg class="dot"><use href="#dot"/></svg><span>Simple ...</span></div>
                </div>
                <div class="symbol-buttons">
                  <button class="push" aria-label="Add symbol layer"><svg viewBox="0 0 24 24"><path d="M9 2h6v7h7v6h-7v7H9v-7H2V9h7z" fill="#fff" stroke="#4e9161" stroke-width="1.500"/><path d="M12 4.500v15M4.500 12h15" stroke="#4e9161" stroke-width="2.600"/></svg></button>
                  <button class="push" aria-label="Move up" disabled><svg viewBox="0 0 24 24"><path d="M12 4l10 16H2z" fill="#d3d6d8" stroke="#b8bcc0" stroke-linejoin="round"/></svg></button>
                  <button class="push" aria-label="Remove symbol layer" disabled></button>
                  <button class="push" aria-label="Move down" disabled></button>
                </div>
              </div>
            </div>
            <div class="vscroll"><button aria-label="Scroll up"><svg><use href="#up"/></svg></button><span class="thumb"></span><button aria-label="Scroll down"><svg><use href="#down"/></svg></button></div>
          </div>
          <div class="actions">
            <button class="push orange" aria-label="Undo style"><svg><use href="#undo"/></svg></button>
            <button class="push green" aria-label="Redo style"><svg><use href="#redo"/></svg></button>
            <label class="live"><span class="tick"><input type="checkbox" checked><svg><use href="#check"/></svg></span>Live update</label>
            <button class="push apply">Apply</button>
          </div>
        </div>
      </div>
    </section>
    <div class="splitter"></div>
    <section class="results">
      <header class="dock-title"><h2>Results Viewer</h2><button aria-label="Float Results Viewer"><svg><use href="#float"/></svg></button><button aria-label="Close Results Viewer"><svg><use href="#close"/></svg></button></header>
      <div class="results-list"></div>
    </section>
    <div class="splitter low"></div>
    <div class="results-detail"></div>
  </aside>
</div>
<script src="map.js"></script>
</body>
</html>
```
FILE: styles.css
```css
* { box-sizing: border-box; }
html, body { height: 100%; }
body {
  margin: 0;
  display: flex;
  flex-direction: column;
  overflow: hidden;
  background: #efefef;
  color: #000;
  font: 16px/20px "Open Sans", "Noto Sans", sans-serif;
}
button { padding: 0; border: 0; background: none; color: inherit; font: inherit; white-space: nowrap; }
h1, h2 { margin: 0; font-weight: 400; }
svg { display: block; }
.sprite { position: absolute; width: 0; height: 0; }

.titlebar { display: flex; align-items: center; flex: none; height: 34px; padding: 0 2px; background: #fff; color: #8f8f8f; }
.logo { width: 24px; height: 24px; margin-right: 5px; }
.titlebar h1 { font-size: 17px; flex: 1; }
.window-buttons { display: flex; }
.window-buttons button { width: 70px; height: 34px; display: grid; place-items: center; }
.window-buttons svg { width: 16px; height: 16px; }

.menubar { display: flex; gap: 16px; flex: none; height: 29px; padding: 1px 0 0 13px; color: #9a9a9a; font-size: 17px; }
.menubar u { text-underline-offset: 3px; text-decoration-thickness: 1px; }

.toolbar { display: flex; align-items: center; flex: none; height: 43px; border-top: 1px solid #d4d4d4; background: linear-gradient(#fbfbfb, #eeeeee); }
.toolbar.second { border-top-color: #b5b5b5; }
.grip { flex: none; width: 24px; height: 17px; padding-left: 15px; }
.grip:first-child { width: 18px; padding-left: 8px; }
.grip::before { content: ""; display: block; width: 5px; height: 17px; background: linear-gradient(90deg, #bdbdbd 1px, transparent 1px 3px, #bdbdbd 3px 4px, transparent 4px); mask: repeating-linear-gradient(#000 0 1px, transparent 1px 3px); }
.rule { flex: none; width: 10px; height: 18px; border-right: 1px solid #ccc; }
.tool { flex: none; display: flex; align-items: center; justify-content: center; width: 33px; height: 32px; }
.tool > svg { width: 24px; height: 24px; overflow: visible; }
.tool.drop { width: 51px; justify-content: flex-start; padding-left: 4px; gap: 7px; }
svg.arrow, .tool > svg.arrow, .mini-tools svg.arrow { width: 12px; height: 8px; }
.tool.on { border: 1px solid #b0b0b0; border-radius: 3px; background: #dcdcdc; }
.tool.off > svg { opacity: .42; filter: grayscale(.4); }
.tool.off > svg.dark { opacity: .7; }
.brown { color: #a0715a; }
.teal { color: #7fa89a; }
.tag-yellow { --tag-fill: #fce94f; --tag-line: #c4a000; }
.tag-blue { --tag-fill: #b8dcff; --tag-line: #4d94e0; }
.tag-red { --tag-fill: #ffc4c4; --tag-line: #f00; }
.tag-red text { fill: #e00000; }
.tag-gray { --tag-fill: #bdbd9c; --tag-line: #777760; }
.t-abc { font: 700 8px "DejaVu Sans", sans-serif; fill: #222; }
.t-a { font: 13px "DejaVu Sans", sans-serif; fill: #333; }
.t-11 { font: 700 8px "DejaVu Sans", sans-serif; fill: #444; }
.t-i { font: italic 700 15px "Liberation Serif", serif; fill: #fff; }
.t-q { font: 16px "Liberation Serif", serif; fill: #fff; }
.t-ab { font: 700 9px "DejaVu Sans", sans-serif; fill: #222; }
.t-ab2 { font: 700 12px "DejaVu Sans", sans-serif; fill: #222; }

.workspace { flex: 1; min-height: 0; display: grid; grid-template-columns: minmax(0, 1fr) 464px; border-top: 1px solid #b0b0b0; }
.canvas { min-width: 0; border: solid #b5b5b5; border-width: 1px 1px 0 1px; background: #fff; overflow: hidden; }
#map { width: 100%; }
.quake { fill: #e8718d; stroke: #262626; stroke-width: 1; }

.docks { display: flex; flex-direction: column; min-height: 0; padding-left: 9px; }
.dock-title { display: flex; align-items: center; gap: 3px; height: 24px; padding: 0 2px 0 4px; }
.dock-title h2 { flex: 1; font-size: 17px; }
.dock-title button, .dock-title svg { width: 12px; height: 12px; }
.layers { display: flex; flex-direction: column; height: 264px; }
.mini-tools { display: flex; align-items: center; gap: 1px; height: 32px; padding: 0 0 4px 6px; }
.mini-tools button { width: 24px; height: 24px; display: grid; place-items: center; }
.mini-tools svg { width: 17px; height: 17px; }
.mini-tools .on { border: 1px solid #aaa; border-radius: 3px; background: #dcdcdc; }
.mini-tools .drop { display: flex; align-items: center; justify-content: space-between; width: 42px; padding: 0 3px 0 4px; }
.layer-tree { flex: 1; display: flex; flex-direction: column; justify-content: space-between; border: 1px solid #b0b0b0; background: #fff; overflow: hidden; }
.layer-row { display: flex; align-items: center; height: 27px; padding-left: 33px; background: #efefef; white-space: nowrap; }
.tick { display: grid; flex: none; }
.tick > * { grid-area: 1 / 1; place-self: center; }
.tick input { appearance: none; width: 21px; height: 21px; margin: 0; border: 1px solid #b5b5b5; background: #fff; }
.tick svg { width: 18px; height: 18px; pointer-events: none; }
.dot { width: 14px; height: 14px; flex: none; }
.layer-row .dot { margin: 0 11px; }
.layer-name { font-size: 17px; font-weight: 700; text-decoration: underline; }
.hscroll { display: flex; height: 21px; border-top: 1px solid #b5b5b5; background: #e3e3e3; }
.hscroll button { width: 20px; display: grid; place-items: center; background: #f6f6f6; }
.hscroll svg, .vscroll svg { width: 12px; height: 8px; }
.turn-left { transform: rotate(-90deg); }
.turn-right { transform: rotate(90deg); }
.hscroll .thumb { flex: 1; margin-right: 12px; border: solid #b5b5b5; border-width: 0 1px; background: linear-gradient(#fff, #f0f0f0); }
.hscroll button:last-child { border-left: 1px solid #b5b5b5; }
.tabs { display: flex; align-items: flex-start; height: 36px; padding-top: 2px; }
.tabs button { height: 32px; padding: 0 17px; border: 1px solid #b8b8b8; border-width: 1px 1px 1px 0; border-radius: 0 0 3px 3px; background: #dedede; font-size: 15px; }
.tabs button:first-child { border-left-width: 1px; }
.tabs button[aria-selected] { height: 34px; background: #f8f8f8; border-top-color: #f8f8f8; }

.splitter { flex: none; height: 10px; display: grid; place-items: center; }
.splitter::before { content: ""; width: 17px; height: 1px; background: repeating-linear-gradient(90deg, #a8a8a8 0 1px, transparent 1px 3px); }
.splitter.low { height: 6px; }
.styling { height: 218px; }
.combo { display: grid; align-items: center; height: 32px; border: 1px solid #b0b0b0; border-radius: 3px; background: linear-gradient(#fdfdfd, #ececec); }
.combo > * { grid-area: 1 / 1; }
.combo select { appearance: none; width: 100%; height: 30px; padding: 1px 30px 0 32px; border: 0; background: none; font: inherit; color: inherit; }
.combo .lead { width: 22px; height: 22px; margin-left: 7px; }
.combo .arrow { justify-self: end; margin-right: 11px; pointer-events: none; }
.layer-combo { margin: 0 2px 0 3px; }
.style-body { display: flex; gap: 3px; height: 151px; margin: 9px 3px 0 3px; }
.pages { display: flex; width: 38px; }
.page-list { width: 17px; overflow: hidden; background: #5c5c5c; }
.page-list button { display: block; width: 32px; height: 32px; padding-left: 4px; }
.page-list .current { background: #efefef; padding-left: 6px; }
.page-list svg { width: 24px; height: 24px; }
.vscroll { display: flex; flex-direction: column; width: 21px; background: #e3e3e3; border-left: 1px solid #b5b5b5; }
.vscroll button { height: 20px; display: grid; place-items: center; background: #f6f6f6; }
.vscroll .thumb { flex: 1; margin-bottom: 37px; border: solid #b5b5b5; border-width: 1px 0; background: linear-gradient(90deg, #fff, #f0f0f0); }
.vscroll button:last-child { border-top: 1px solid #b5b5b5; }
.style-main { flex: 1; min-width: 0; display: flex; flex-direction: column; }
.renderer { display: flex; height: 102px; margin-top: 9px; overflow: hidden; }
.renderer .vscroll .thumb { margin-bottom: 20px; }
.renderer-form { flex: 1; min-width: 0; }
.symbol-area { display: flex; justify-content: flex-end; gap: 9px; margin-top: 9px; }
.symbol-tree { width: 182px; height: 90px; border: 1px solid #b0b0b0; background: #fff; font-size: 17px; }
.symbol-row { display: flex; align-items: center; height: 27px; }
.root { padding-left: 9px; background: #efefef; font-weight: 700; }
.root .dot { margin: 0 9px 0 15px; }
.leaf { padding-left: 66px; }
.leaf .dot { margin-right: 8px; }
.symbol-buttons { display: grid; grid-template-columns: 39px 39px; grid-auto-rows: 33px; gap: 14px 9px; padding-top: 9px; }
.push { display: grid; place-items: center; border: 1px solid #b0b0b0; border-radius: 3px; background: linear-gradient(#fdfdfd, #eeeeee); }
.push:disabled { border-color: #c8c8c8; background: #f1f1f1; }
.push svg { width: 24px; height: 24px; }
.actions { display: flex; align-items: center; gap: 6px; margin-top: 9px; }
.actions .push { width: 32px; height: 31px; }
.actions .push svg { width: 20px; height: 20px; }
.orange { color: #e8853f; }
.green { color: #84bd8c; }
.live { display: flex; align-items: center; gap: 8px; margin-left: auto; margin-right: 6px; font-size: 15px; }
.actions .apply { width: 80px; }
.results { height: 213px; display: flex; flex-direction: column; }
.results .dock-title { height: 21px; padding-top: 1px; }
.results-list { flex: 1; border: 1px solid #b0b0b0; background: #fff; }
.results-detail { flex: 1; border: 1px solid #b0b0b0; border-bottom: 0; background: #fff; }
```
FILE: map.js
```js
// Survey tiles: origin in canvas units, coordinates inside a tile in thirds of a unit.
// "bands" are dense fault lines [spread, count, x,y, x,y, ...]; "points" are single events.
const tiles = [
  { x: 259, y: 239,
    bands: [
      [14, 44, 622,472, 655,475, 690,488, 735,498],
      [12, 40, 725,498, 775,520, 800,548, 830,570],
      [16, 18, 845,565, 870,600],
      [10, 16, 870,570, 905,532, 985,538],
      [20, 30, 845,590, 828,630, 835,680],
      [16, 30, 832,690, 850,725, 895,755],
      [15, 52, 900,750, 910,790, 903,850, 890,905],
      [10, 16, 490,315, 530,345],
      [12, 8, 855,475, 935,470],
      [8, 8, 100,205, 235,165]
    ],
    points: "912,36 63,153 198,129 285,103 279,99 275,138 297,134 336,134 327,152 287,136 327,166 370,152 383,146 378,155 383,168 403,192 420,205 420,210 38,214 45,212 60,212 70,205 52,210 98,210 107,213 113,184 143,183 120,200 113,198 125,199 165,194 180,185 200,176 213,177 235,165 230,162 238,163 467,222 468,227 490,243 490,252 489,260 492,284 460,300 466,296 473,298 480,308 489,315 497,325 520,308 528,300 522,322 540,330 503,348 510,352 525,360 548,368 522,346 540,345 556,392 570,399 562,325 573,312 570,288 580,262 575,248 573,250 557,270 582,278 624,285 558,471 222,460 224,467 228,469 123,633 38,741 27,757 80,744 82,750 90,768 90,760 80,746 38,771 60,777 75,795 38,790 51,800 60,815 53,828 62,826 84,846 50,856 45,862 38,873 48,870 51,858 561,801 417,882 549,1026 902,237 939,246 872,264 843,279 864,300 798,318 1023,264 620,447 615,475 645,460 672,465 690,474 715,477 730,490 792,489 764,497 738,508 695,494 657,476 782,528 803,548 807,573 820,560 888,585 905,603 850,567 862,588 893,636 902,645 837,447 858,480 870,465 848,468 900,475 888,466 910,463 920,480 933,472 921,471 993,498 975,492 973,489 985,515 985,533 965,540 945,538 925,540 905,530 912,543 890,555 828,630 850,648 855,672 833,702 858,718 903,689 906,706 930,734 875,736 890,759 949,768 953,803 942,822 908,813 969,856 971,857 932,873 926,890 928,905 899,873 894,893 868,933 885,933 877,955 870,969 888,984 903,1058 900,1056 882,1044" },
  { x: 639, y: 239,
    bands: [
      [9, 30, 275,327, 330,337, 410,332, 465,320],
      [18, 34, 380,266, 440,262, 500,275],
      [24, 100, 440,285, 500,285, 550,300, 620,305, 690,300],
      [16, 24, 500,325, 620,330],
      [18, 40, 690,285, 740,315, 810,335],
      [26, 60, 745,360, 780,365, 800,370],
      [12, 20, 750,385, 790,405]
    ],
    points: "159,109 187,92 200,93 170,110 168,111 298,198 309,204 342,189 379,215 381,212 331,276 327,255 408,236 108,308 100,317 125,318 139,323 105,315 168,318 182,326 192,336 246,336 96,387 258,381 262,311 297,351 279,329 298,320 322,318 325,338 390,330 390,264 489,243 444,252 549,255 567,276 611,267 633,264 651,273 700,273 713,278 735,300 774,306 504,363 538,347 525,318 460,321 572,365 584,384 621,366 609,402 614,393 597,435 815,360 804,342 742,375 780,408 795,397 752,387 714,357 498,288 588,315 690,330 675,300 645,318 588,501 642,507 654,498 684,492 692,506 654,540 670,528 683,532 672,530 690,512 642,567 600,600 592,582 590,582 590,630 576,621 621,621 612,630 567,654 615,657 654,657 549,675 588,690 582,690 612,735 225,528 339,570 330,579 408,591 465,594 460,603 438,627 48,669 0,537 555,837 549,848 549,840 582,837 567,870 490,891 491,891 792,897 591,1023 96,1059 114,1104 117,1092 114,1077 162,1113 845,300" },
  { x: 919, y: 269,
    bands: [
      [14, 34, 50,212, 110,202, 165,190],
      [24, 40, 35,245, 85,242],
      [10, 14, 45,260, 25,300],
      [10, 16, 100,270, 145,298],
      [24, 54, 235,322, 290,320, 335,322],
      [10, 26, 220,352, 290,362, 338,355],
      [18, 20, 290,245, 335,240],
      [12, 18, 305,275, 330,300],
      [12, 34, 365,207, 430,210, 488,205],
      [8, 10, 425,280, 465,282],
      [14, 26, 490,335, 540,305, 555,270],
      [26, 66, 585,250, 625,220, 645,190],
      [16, 16, 605,190, 640,165],
      [12, 34, 660,185, 710,165, 745,135],
      [14, 32, 750,125, 790,92, 820,90],
      [16, 34, 475,335, 465,380, 468,420],
      [20, 42, 480,425, 500,460, 510,495],
      [30, 30, 455,535, 505,520, 515,545],
      [10, 36, 250,485, 290,520, 315,560],
      [10, 42, 315,570, 350,592, 405,612],
      [9, 24, 410,600, 530,602],
      [14, 36, 535,570, 590,555, 650,565],
      [18, 50, 650,572, 720,582],
      [10, 34, 720,585, 770,605, 820,620],
      [8, 36, 825,620, 838,650, 850,680, 858,705]
    ],
    points: "432,81 5,210 2,333 177,153 177,150 215,155 170,195 180,185 201,180 231,185 252,171 281,143 285,140 294,168 321,147 150,173 117,215 54,232 168,237 190,250 198,252 129,234 110,270 130,290 155,303 133,288 62,324 57,348 81,360 90,393 111,390 139,348 30,298 40,294 192,318 198,299 230,290 230,285 272,215 266,236 288,245 345,222 320,225 303,265 350,250 323,239 318,280 354,292 378,288 213,360 240,357 275,319 317,327 293,357 348,344 370,350 395,352 376,368 363,390 376,368 267,395 270,387 291,414 240,438 422,350 425,333 411,214 448,215 484,210 470,190 478,187 502,182 519,154 547,150 519,168 502,182 549,192 573,213 480,250 475,236 420,252 390,242 420,283 440,278 460,275 462,285 453,282 522,252 546,280 594,168 630,158 638,140 645,110 684,129 678,119 755,92 810,68 815,78 813,105 799,92 783,159 636,276 615,260 648,222 696,173 771,117 735,147 617,195 568,248 872,110 890,107 913,120 938,122 930,145 930,125 936,120 627,324 648,355 651,354 669,390 681,414 655,423 660,435 660,423 561,486 600,477 606,477 372,453 435,405 459,408 477,373 470,342 505,354 506,438 512,477 447,493 434,486 425,551 440,528 450,555 458,562 480,524 490,545 523,520 525,545 536,573 254,519 252,480 270,498 315,570 405,580 357,573 355,588 385,625 408,620 400,600 447,625 531,616 475,604 499,602 597,543 580,567 672,540 723,553 648,592 678,612 720,610 718,577 668,583 642,558 576,583 770,608 837,599 833,635 848,667 849,697 880,717 861,720 903,714 943,663 939,670 929,682 936,741 207,555 75,591 279,645 372,711 571,693 573,693 435,788 438,783 609,816 702,810 714,801 915,840 934,843 918,860 935,838 903,857 873,868 891,895 873,872 875,880 828,908 816,926 773,932 789,930 772,957 786,957 761,984 765,1010 771,1008 696,1041" }
];

const map = document.getElementById("map");
let seed = 7;
const random = () => (seed = (seed * 16807) % 2147483647) / 2147483647;

function plot(tile, x, y) {
  const c = document.createElementNS("http://www.w3.org/2000/svg", "circle");
  c.setAttribute("cx", (tile.x + x / 3).toFixed(1));
  c.setAttribute("cy", (tile.y + y / 3).toFixed(1));
  c.setAttribute("r", 5.6);
  c.setAttribute("class", "quake");
  map.append(c);
}

for (const tile of tiles) {
  for (const [spread, count, ...line] of tile.bands) {
    const segments = line.length / 2 - 1;
    for (let i = 0; i < count; i++) {
      const t = random() * segments;
      const k = Math.floor(t) * 2;
      const f = t % 1;
      plot(tile,
        line[k] + (line[k + 2] - line[k]) * f + (random() * 2 - 1) * spread,
        line[k + 1] + (line[k + 3] - line[k + 1]) * f + (random() * 2 - 1) * spread);
    }
  }
  for (const pair of tile.points.split(" ")) plot(tile, ...pair.split(",").map(Number));
}
```
